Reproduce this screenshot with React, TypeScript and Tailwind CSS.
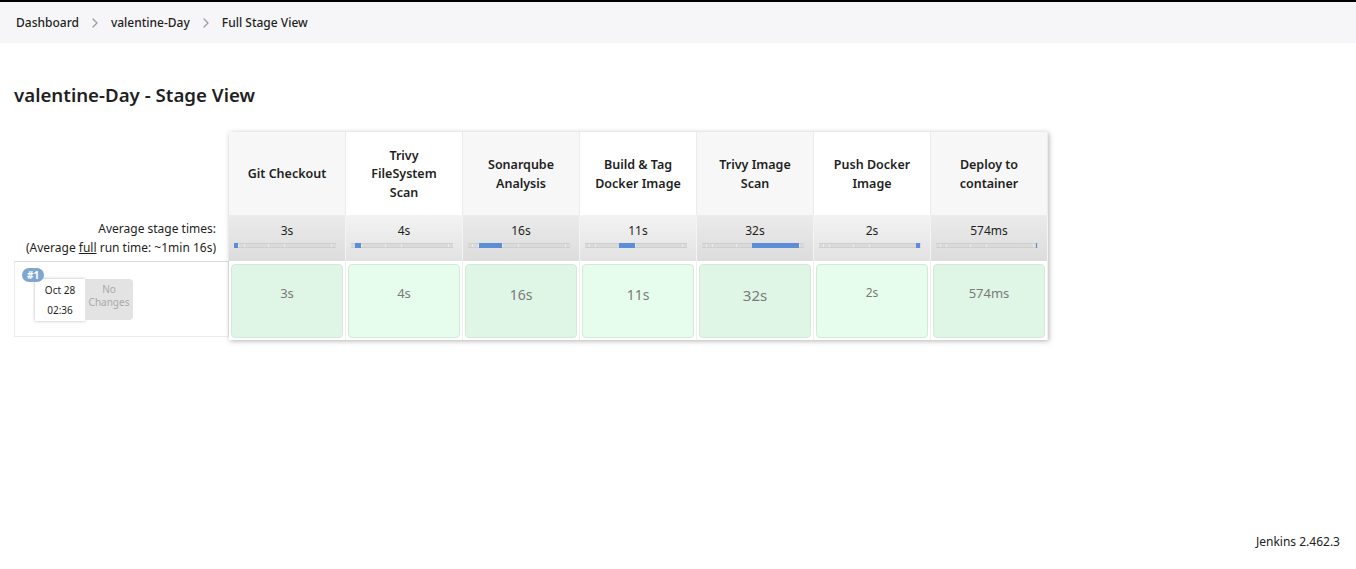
import { Fragment } from 'react'

type Stage = {
  name: string[]
  avg: string
  start: number
  width: number
  size: string
}

const stages: Stage[] = [
  { name: ['Git Checkout'], avg: '3s', start: 0, width: 4, size: 'text-[13px]' },
  { name: ['Trivy', 'FileSystem', 'Scan'], avg: '4s', start: 4, width: 6, size: 'text-[13px]' },
  { name: ['Sonarqube', 'Analysis'], avg: '16s', start: 11, width: 23, size: 'text-[14px]' },
  { name: ['Build & Tag', 'Docker Image'], avg: '11s', start: 34, width: 16, size: 'text-[14px]' },
  { name: ['Trivy Image', 'Scan'], avg: '32s', start: 50, width: 47, size: 'text-[15px]' },
  { name: ['Push Docker', 'Image'], avg: '2s', start: 97, width: 4, size: 'text-[12px]' },
  { name: ['Deploy to', 'container'], avg: '574ms', start: 100, width: 1, size: 'text-[13px]' },
]

const ticks = [4, 10, 34, 50, 97]

const Chevron = () => (
  <svg width="8" height="12" viewBox="0 0 8 12" className="mx-[12px]">
    <path d="M2 2l4 4-4 4" fill="none" stroke="#9a9aa0" strokeWidth="1.2" strokeLinecap="round" strokeLinejoin="round" />
  </svg>
)

const StageBar = ({ start, width }: { start: number; width: number }) => (
  <div className="relative h-[5px] w-[102px] bg-[#dadada] border-y border-[#cfcfcf]">
    {ticks.map((t) => (
      <div key={t} className="absolute top-0 h-full w-px bg-[#ececec]" style={{ left: t }} />
    ))}
    <div className="absolute top-[-1px] h-[5px] bg-[#5b8ed6]" style={{ left: start, width }} />
  </div>
)

export default function App() {
  return (
    <div
      className="flex min-h-screen flex-col border-t-2 border-black bg-white text-[#1f1f23]"
      style={{ fontFamily: '"Noto Sans", "Open Sans", sans-serif' }}
    >
      <nav className="flex h-[41px] items-center bg-[#f6f6f8] pl-4 pt-[1px] text-[12px] font-medium">
        <span>Dashboard</span>
        <Chevron />
        <span>valentine-Day</span>
        <Chevron />
        <span>Full Stage View</span>
      </nav>

      <main className="flex-1 px-[14px]">
        <h1 className="mt-[39px] text-[18.7px] font-semibold leading-[26px]">valentine-Day - Stage View</h1>

        <div className="mt-[24px] flex">
          <div className="flex w-[215px] flex-col">
            <div className="h-[83px]" />
            <div className="flex h-[46px] flex-col items-end justify-center pr-[13px] text-[12px] leading-[19px]">
              <span>Average stage times:</span>
              <span>
                (Average <span className="underline">full</span> run time: ~1min 16s)
              </span>
            </div>
            <div className="h-[76px] border border-[#ececec] border-t-[#dcdcdc] pt-[6px] pl-[7px]">
              <div className="relative z-10 w-fit rounded-full bg-[#7ea6d0] px-[5px] text-[10px] font-bold leading-[14px] text-white">
                #1
              </div>
              <div className="ml-[13px] -mt-[3px] flex">
                <div className="flex h-[42px] w-[50px] flex-col items-center justify-center gap-[6px] bg-white text-[10px] leading-[14px] shadow-[0_0_3px_rgba(0,0,0,0.3)]">
                  <span>Oct 28</span>
                  <span>02:36</span>
                </div>
                <div className="flex h-[41px] w-[48px] flex-col items-center rounded-r-[4px] bg-[#e3e3e3] pt-[4px] text-[10px] leading-[13px] text-[#a9a9a9]">
                  <span>No</span>
                  <span>Changes</span>
                </div>
              </div>
            </div>
          </div>

          <div className="grid grid-cols-[repeat(7,117px)] shadow-[1px_1px_5px_rgba(0,0,0,0.3)]">
            {stages.map((s, i) => (
              <div
                key={`h${i}`}
                className={`flex h-[83px] flex-col items-center justify-center border-r border-[#ececec] px-2 pt-[2px] text-center text-[12.5px] font-semibold leading-[18.5px] ${
                  i % 2 === 0 ? 'bg-[#f7f7f7]' : 'bg-white'
                }`}
              >
                {s.name.map((n) => (
                  <Fragment key={n}>
                    <span>{n}</span>
                  </Fragment>
                ))}
              </div>
            ))}
            {stages.map((s, i) => (
              <div
                key={`a${i}`}
                className={`flex h-[46px] flex-col items-center border-r border-[#f4f4f4] bg-linear-to-b pt-[7px] ${
                  i % 2 === 0 ? 'from-[#ebebeb] to-[#dcdcdc]' : 'from-[#f3f3f3] to-[#e2e2e2]'
                }`}
              >
                <span className="text-[12px] leading-[17px]">{s.avg}</span>
                <div className="mt-[4px] self-start pl-[5px]">
                  <StageBar start={s.start} width={s.width} />
                </div>
              </div>
            ))}
            {stages.map((s, i) => (
              <div key={`d${i}`} className="h-[79px] border-r border-[#efefef] bg-white p-[2px] pt-[3px]">
                <div
                  className={`flex h-full justify-center rounded-[4px] border border-[#d3ead9] pt-[19px] text-[#7a7a7a] ${s.size} ${
                    i % 2 === 0 ? 'bg-[#dff5e6]' : 'bg-[#e6fded]'
                  }`}
                >
                  {s.avg}
                </div>
              </div>
            ))}
          </div>
        </div>
      </main>

      <footer className="flex h-[56px] items-start justify-end pr-4 pt-[20px] text-[12px] text-[#222]">
        Jenkins 2.462.3
      </footer>
    </div>
  )
}
